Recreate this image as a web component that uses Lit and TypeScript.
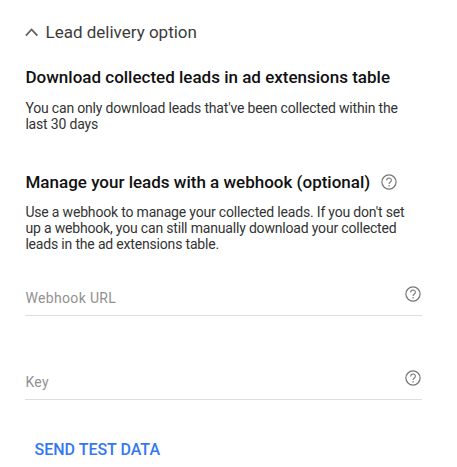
import { LitElement, html, css } from "lit";

class HelpIcon extends LitElement {
  static styles = css`
    :host { display: block; width: 16px; height: 16px; }
    svg { display: block; width: 100%; height: 100%; fill: none; stroke: #757575; }
  `;
  render() {
    return html`<svg viewBox="0 0 16 16"><circle cx="8" cy="8" r="7.1" stroke-width="1.2"/><path d="M5.700 6.400C5.700 3.200 10.400 3.300 10.400 6.200C10.400 8 8.100 8 8.100 10M8.100 11V12.400" stroke-width="1.1"/></svg>`;
  }
}
customElements.define("help-icon", HelpIcon);

class AppRoot extends LitElement {
  static styles = css`
    :host { display: block; box-sizing: border-box; width: 457px; height: 467px; padding: 20px 35px 0 25px; background: #fff; color: #111; font-family: Roboto, sans-serif; overflow: hidden; }
    .top { display: flex; align-items: center; height: 24px; gap: 7.5px; font-size: 17px; color: #3c3c3c; }
    .chevron { width: 13px; height: 9px; fill: none; stroke: #616161; stroke-width: 1.8; }
    h2 { margin: 0; padding-left: 0.5px; font-size: 17px; line-height: 24px; font-weight: 500; white-space: nowrap; }
    .download { margin-top: 21px; }
    p { margin: 11px 0 0; padding-left: 0.4px; font-size: 14px; letter-spacing: -0.18px; line-height: 16px; white-space: nowrap; color: #333; }
    .manage { display: flex; align-items: center; gap: 11px; margin-top: 38px; }
    .manage + p { margin-top: 10px; }
    .field { display: flex; justify-content: space-between; box-sizing: border-box; width: 397px; height: 31px; padding: 0 1.5px 0 0.4px; border-bottom: 1px solid #dedede; color: #919191; font-size: 14px; letter-spacing: 0.35px; }
    .field span { padding-top: 5px; line-height: 16px; }
    .field help-icon { margin-top: 0.5px; }
    .url { margin-top: 33px; }
    .key { margin-top: 53px; }
    .send { display: block; margin: 38px 0 0 9.5px; padding: 0; border: 0; background: none; color: #3478f0; font: 500 16px/24px Roboto, sans-serif; }
  `;
  render() {
    return html`
      <div class="top"><svg class="chevron" viewBox="0 0 13 9"><path d="M.9 7.700 6.600 1.500 12.300 7.700"/></svg><span>Lead delivery option</span></div>
      <h2 class="download">Download collected leads in ad extensions table</h2>
      <p>You can only download leads that've been collected within the<br>last 30 days</p>
      <div class="manage"><h2>Manage your leads with a webhook (optional)</h2><help-icon></help-icon></div>
      <p>Use a webhook to manage your collected leads. If you don't set<br>up a webhook, you can still manually download your collected<br>leads in the ad extensions table.</p>
      <div class="field url"><span>Webhook URL</span><help-icon></help-icon></div>
      <div class="field key"><span>Key</span><help-icon></help-icon></div>
      <button class="send">SEND TEST DATA</button>
    `;
  }
}
customElements.define("app-root", AppRoot);
